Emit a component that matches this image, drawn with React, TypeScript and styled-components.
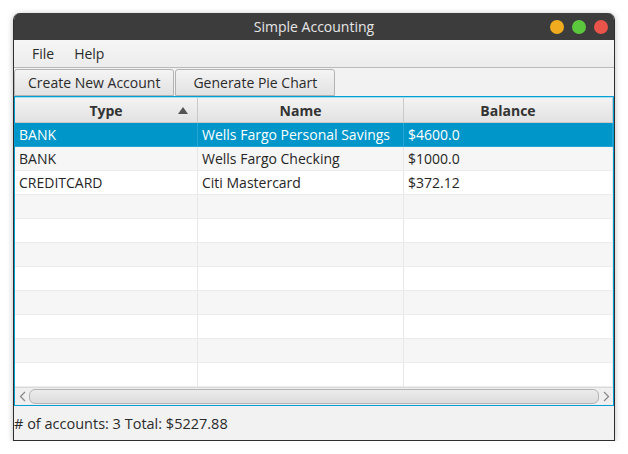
import React from "react";
import styled, { createGlobalStyle } from "styled-components";

interface Account {
  type: string;
  name: string;
  balance: string;
}

const accounts: Account[] = [
  { type: "BANK", name: "Wells Fargo Personal Savings", balance: "$4600.0" },
  { type: "BANK", name: "Wells Fargo Checking", balance: "$1000.0" },
  { type: "CREDITCARD", name: "Citi Mastercard", balance: "$372.12" },
];

const TOTAL_ROWS = 11;

const GlobalStyle = createGlobalStyle`
  body {
    margin: 0;
    background: #ffffff;
    font-family: "Open Sans", "Noto Sans", sans-serif;
  }
`;

const Page = styled.div`
  padding: 13px 0 0 13px;
`;

const Window = styled.div`
  width: 600px;
  height: 427px;
  display: flex;
  flex-direction: column;
  border: 1px solid #2e2e2e;
  border-top: none;
  border-radius: 7px 7px 0 0;
  overflow: hidden;
  background: #f2f2f2;
  box-shadow: 0 1px 6px rgba(0, 0, 0, 0.25);
`;

const TitleBar = styled.div`
  height: 27px;
  flex: none;
  background: #3c3c3c;
  display: flex;
  align-items: center;
  justify-content: center;
  position: relative;
  color: #e6e6e6;
  font-size: 14px;
`;

const Lights = styled.div`
  position: absolute;
  right: 6px;
  top: 7px;
  display: flex;
  gap: 8px;
`;

const Light = styled.span<{ $color: string }>`
  width: 14px;
  height: 14px;
  border-radius: 50%;
  background: ${(p) => p.$color};
`;

const MenuBar = styled.div`
  height: 27px;
  flex: none;
  display: flex;
  align-items: center;
  gap: 20px;
  padding-left: 18px;
  background: linear-gradient(#f6f6f6, #ececec);
  border-bottom: 1px solid #b9b9b9;
  font-size: 14px;
  color: #2b2b2b;
`;

const Toolbar = styled.div`
  height: 28px;
  flex: none;
  display: flex;
  gap: 1px;
  align-items: flex-end;
`;

const ToolButton = styled.button<{ $pad: number }>`
  height: 27px;
  padding: 0 ${(p) => p.$pad}px;
  border: 1px solid #b3b3b3;
  border-radius: 3px 3px 0 0;
  background: linear-gradient(#f4f4f4, #e2e2e2);
  font-family: "Open Sans", "Noto Sans", sans-serif;
  font-size: 14px;
  color: #2b2b2b;
  cursor: pointer;
`;

const Table = styled.div`
  height: 307px;
  flex: none;
  display: flex;
  flex-direction: column;
  border: 1px solid #039ed3;
  box-shadow: inset 0 0 0 1px rgba(3, 158, 211, 0.35);
  background: #ffffff;
  padding-top: 1px;
`;

const Row = styled.div<{ $bg?: string; $height?: number }>`
  display: grid;
  grid-template-columns: 183px 206px 1fr;
  height: ${(p) => p.$height ?? 24}px;
  flex: none;
  background: ${(p) => p.$bg ?? "#ffffff"};
`;

const HeadCell = styled.div`
  position: relative;
  display: flex;
  align-items: center;
  justify-content: center;
  font-weight: 700;
  font-size: 14px;
  color: #333333;
  background: linear-gradient(#f3f3f3, #e2e2e2);
  border-right: 1px solid #c9c9c9;
  border-bottom: 1px solid #c9c9c9;
`;

const SortArrow = styled.span`
  position: absolute;
  right: 9px;
  top: 9px;
  width: 0;
  height: 0;
  border-left: 5px solid transparent;
  border-right: 5px solid transparent;
  border-bottom: 7px solid #555555;
`;

const Cell = styled.div<{ $selected?: boolean }>`
  display: flex;
  align-items: center;
  padding-left: 4px;
  font-size: 14px;
  white-space: nowrap;
  color: ${(p) => (p.$selected ? "#ffffff" : "#262626")};
  border-right: 1px solid ${(p) => (p.$selected ? "#27a6d6" : "#e8e8e8")};
  border-bottom: 1px solid ${(p) => (p.$selected ? "#27a6d6" : "#ececec")};
`;

const ScrollBar = styled.div`
  height: 17px;
  flex: none;
  display: flex;
  align-items: center;
  background: #efefef;
  border-top: 1px solid #dadada;
  margin-top: auto;
`;

const Arrow = styled.span`
  width: 14px;
  display: flex;
  justify-content: center;
`;

const Thumb = styled.div`
  flex: 1;
  height: 13px;
  border: 1px solid #b3b3b3;
  border-radius: 6px;
  background: linear-gradient(#ececec, #dcdcdc);
`;

const StatusBar = styled.div`
  flex: 1;
  display: flex;
  align-items: center;
  font-size: 14.5px;
  color: #2b2b2b;
  padding-top: 1px;
`;

const Chevron: React.FC<{ dir: "left" | "right" }> = ({ dir }) => (
  <svg width="7" height="11" viewBox="0 0 7 11">
    <path
      d={dir === "left" ? "M6 1 L1.5 5.5 L6 10" : "M1 1 L5.5 5.5 L1 10"}
      fill="none"
      stroke="#8a8a8a"
      strokeWidth="1.3"
    />
  </svg>
);

export default function App() {
  const rows = Array.from({ length: TOTAL_ROWS }, (_, i) => accounts[i]);

  return (
    <>
      <GlobalStyle />
      <Page>
        <Window>
          <TitleBar>
            Simple Accounting
            <Lights>
              <Light $color="#f0ac1e" />
              <Light $color="#5ac73c" />
              <Light $color="#e8534a" />
            </Lights>
          </TitleBar>
          <MenuBar>
            <span>File</span>
            <span>Help</span>
          </MenuBar>
          <Toolbar>
            <ToolButton $pad={13}>Create New Account</ToolButton>
            <ToolButton $pad={17}>Generate Pie Chart</ToolButton>
          </Toolbar>
          <Table>
            <Row $height={25}>
              <HeadCell>
                Type
                <SortArrow />
              </HeadCell>
              <HeadCell>Name</HeadCell>
              <HeadCell>Balance</HeadCell>
            </Row>
            {rows.map((acc, i) => {
              const selected = i === 0;
              const bg = selected ? "#0096c9" : i % 2 === 1 ? "#f6f6f6" : "#ffffff";
              return (
                <Row key={i} $bg={bg}>
                  <Cell $selected={selected}>{acc?.type}</Cell>
                  <Cell $selected={selected}>{acc?.name}</Cell>
                  <Cell $selected={selected}>{acc?.balance}</Cell>
                </Row>
              );
            })}
            <ScrollBar>
              <Arrow>
                <Chevron dir="left" />
              </Arrow>
              <Thumb />
              <Arrow>
                <Chevron dir="right" />
              </Arrow>
            </ScrollBar>
          </Table>
          <StatusBar># of accounts: 3 Total: $5227.88</StatusBar>
        </Window>
      </Page>
    </>
  );
}
